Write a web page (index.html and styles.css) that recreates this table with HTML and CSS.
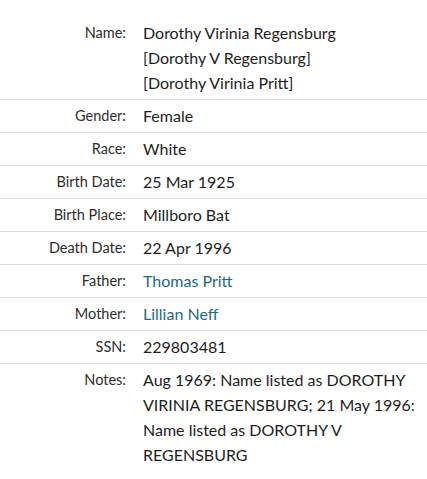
FILE: index.html
```html
<!DOCTYPE html>
<html>
<head>
<meta charset="utf-8">
<link rel="stylesheet" href="styles.css">
</head>
<body>
<table class="facts">
  <tr>
    <th>Name:</th>
    <td>Dorothy Virinia Regensburg<br>[Dorothy V Regensburg]<br>[Dorothy Virinia Pritt]</td>
  </tr>
  <tr><th>Gender:</th><td>Female</td></tr>
  <tr><th>Race:</th><td>White</td></tr>
  <tr><th>Birth Date:</th><td>25 Mar 1925</td></tr>
  <tr><th>Birth Place:</th><td>Millboro Bat</td></tr>
  <tr><th>Death Date:</th><td>22 Apr 1996</td></tr>
  <tr><th>Father:</th><td><a class="link" href="#">Thomas Pritt</a></td></tr>
  <tr><th>Mother:</th><td><a class="link" href="#">Lillian Neff</a></td></tr>
  <tr><th>SSN:</th><td>229803481</td></tr>
  <tr class="last">
    <th>Notes:</th>
    <td>Aug 1969: Name listed as DOROTHY VIRINIA REGENSBURG; 21 May 1996: Name listed as DOROTHY V REGENSBURG</td>
  </tr>
</table>
</body>
</html>
```
FILE: styles.css
```css
html, body {
  margin: 0;
  padding: 0;
  background: #fff;
}
body {
  font-family: Lato, "Liberation Sans", sans-serif;
  color: #1e1e1e;
}
.facts {
  width: 427px;
  border-collapse: collapse;
  margin-top: 17px;
}
.facts th,
.facts td {
  padding: 3px 0 4px;
  vertical-align: top;
  border-bottom: 1px solid #ddd;
  line-height: 25px;
}
.facts th {
  width: 126px;
  text-align: right;
  font-weight: normal;
  font-size: 14.5px;
  color: #2e2e2e;
}
.facts td {
  font-size: 16px;
  padding-left: 17px;
  padding-right: 0;
}
.facts tr.last th,
.facts tr.last td {
  border-bottom: none;
}
.link {
  color: #1f6a80;
  text-decoration: none;
}
```
